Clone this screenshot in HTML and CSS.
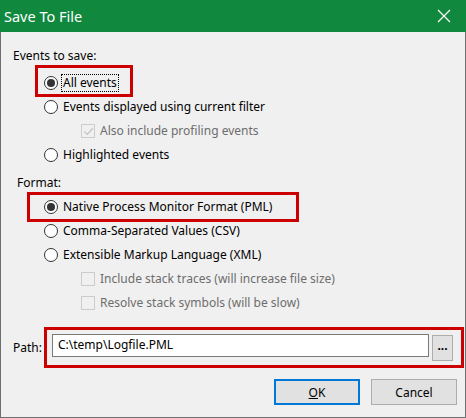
FILE: index.html
```html
<!DOCTYPE html>
<html>
<head>
<meta charset="utf-8">
<link rel="stylesheet" href="styles.css">
</head>
<body>
<div class="window">
  <div class="titlebar">
    <span class="title">Save To File</span>
    <svg class="close" width="14" height="14" viewBox="0 0 14 14"><path d="M1 1 L13 13 M13 1 L1 13" stroke="#fff" stroke-width="1.2" fill="none"/></svg>
  </div>
  <div class="content">
    <div class="group-label">Events to save:</div>
    <div class="options">
      <div class="row radio-row">
        <span class="annot annot-all"></span>
        <span class="radio checked"></span><span class="text focus">All events</span>
      </div>
      <div class="row radio-row"><span class="radio"></span><span class="text">Events displayed using current filter</span></div>
      <div class="row check-row disabled">
        <span class="check">
          <svg width="11" height="11" viewBox="0 0 11 11"><path d="M1.3 5.5 L4.2 8.4 L9.9 2.3" stroke="#c4c4c4" stroke-width="1.3" fill="none"/></svg>
        </span><span class="text">Also include profiling events</span>
      </div>
      <div class="row radio-row"><span class="radio"></span><span class="text">Highlighted events</span></div>
    </div>

    <div class="group-label format-label">Format:</div>
    <div class="options">
      <div class="row radio-row">
        <span class="annot annot-native"></span>
        <span class="radio checked"></span><span class="text">Native Process Monitor Format (PML)</span>
      </div>
      <div class="row radio-row"><span class="radio"></span><span class="text">Comma-Separated Values (CSV)</span></div>
      <div class="row radio-row"><span class="radio"></span><span class="text">Extensible Markup Language (XML)</span></div>
      <div class="row check-row disabled"><span class="check"></span><span class="text">Include stack traces (will increase file size)</span></div>
      <div class="row check-row disabled"><span class="check"></span><span class="text">Resolve stack symbols (will be slow)</span></div>
    </div>

    <div class="path-row">
      <span class="annot annot-path"></span>
      <span class="path-label">Path:</span>
      <div class="path-input">C:\temp\Logfile.PML</div>
      <button class="browse">...</button>
    </div>

    <div class="buttons">
      <button class="btn default"><span class="u">O</span>K</button>
      <button class="btn">Cancel</button>
    </div>
  </div>
</div>
</body>
</html>
```

FILE: styles.css
```css
* { box-sizing: border-box; }
html, body {
  margin: 0;
  padding: 0;
  background: #f0f0f0;
}
body {
  font-family: "Noto Sans", "Open Sans", sans-serif;
  font-size: 12px;
  color: #000;
}
.window {
  width: 466px;
  height: 418px;
  border: 1px solid #6f6f6f;
  border-top: none;
  background: #f0f0f0;
  display: flex;
  flex-direction: column;
}
.titlebar {
  height: 32px;
  margin: 0 -1px;
  background: #10893e;
  display: flex;
  align-items: center;
  justify-content: space-between;
  padding: 0 15px 1px 4px;
}
.title {
  color: #fff;
  font-size: 14.5px;
  line-height: 20px;
}
.close { display: block; }

.content {
  flex: 1;
  display: flex;
  flex-direction: column;
  padding-top: 16px;
}
.group-label {
  height: 16px;
  line-height: 16px;
  padding-left: 12px;
  margin-bottom: 7px;
}
.format-label {
  padding-left: 16px;
  margin-top: 8px;
  margin-bottom: 4px;
}
.options {
  display: flex;
  flex-direction: column;
}
.row {
  position: relative;
  height: 24px;
  display: flex;
  align-items: center;
}
.radio-row { padding-left: 43px; }
.check-row { padding-left: 80px; }
.radio {
  width: 14px;
  height: 14px;
  border: 1px solid #333;
  border-radius: 50%;
  background: #fff;
  display: flex;
  align-items: center;
  justify-content: center;
  flex: none;
}
.radio.checked::after {
  content: "";
  width: 8px;
  height: 8px;
  border-radius: 50%;
  background: #333;
}
.check {
  width: 14px;
  height: 14px;
  border: 1px solid #cccccc;
  background: #f0f0f0;
  display: flex;
  align-items: center;
  justify-content: center;
  flex: none;
}
.check svg { display: block; }
.text {
  margin-left: 3px;
  line-height: 16px;
  padding: 0 1px;
  border: 1px solid transparent;
  white-space: nowrap;
}
.focus { border: 1px dotted #000; }
.disabled .text { color: #6d6d6d; }

.annot {
  position: absolute;
  border: 3px solid #cc0000;
}
.annot-all { left: 34px; top: -6px; width: 98px; height: 32px; }
.annot-native { left: 26px; top: -3px; width: 272px; height: 30px; }
.annot-path { left: 43px; top: -7px; width: 420px; height: 41px; }

.path-row {
  position: relative;
  margin-top: 19px;
  display: flex;
  align-items: flex-start;
  height: 27px;
}
.path-label {
  padding-left: 12px;
  width: 51px;
  margin-top: 6px;
  line-height: 16px;
}
.path-input {
  width: 377px;
  height: 23px;
  border: 1px solid #7a7a7a;
  background: #fff;
  padding-left: 5px;
  line-height: 20px;
  white-space: nowrap;
}
.browse {
  margin-left: 3px;
  margin-top: 1px;
  width: 21px;
  height: 26px;
  padding: 0 0 4px;
  border: 1px solid #adadad;
  background: #e1e1e1;
  font-family: inherit;
  font-size: 12px;
  font-weight: bold;
  line-height: 12px;
  color: #000;
}
.buttons {
  margin-top: 18px;
  display: flex;
  justify-content: flex-end;
  gap: 11px;
  padding-right: 8px;
}
.btn {
  width: 86px;
  height: 26px;
  border: 1px solid #adadad;
  background: #e1e1e1;
  font-family: inherit;
  font-size: 12px;
  color: #000;
  padding: 0;
}
.btn.default {
  border: 2px solid #0078d7;
}
.u { text-decoration: underline; }
```
